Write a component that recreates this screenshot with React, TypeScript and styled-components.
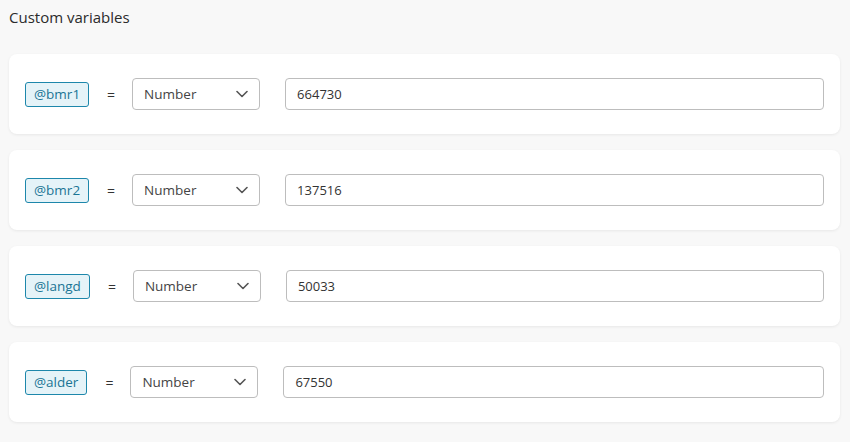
import React from "react";
import styled, { createGlobalStyle } from "styled-components";

const Global = createGlobalStyle`
  html, body { margin: 0; padding: 0; background: #f8f8f8; }
  body { font-family: "Open Sans", "Noto Sans", Arial, sans-serif; color: #333; overflow: hidden; }
  * { box-sizing: border-box; }
`;

const Page = styled.div`
  padding: 0 10px 0 9px;
  height: 442px;
  overflow: hidden;
`;

const Title = styled.h2`
  margin: 0;
  padding-top: 6px;
  font-size: 15px;
  font-weight: 400;
  line-height: 22px;
  color: #2b2b2b;
  height: 54px;
`;

const List = styled.div`
  display: flex;
  flex-direction: column;
  gap: 16px;
`;

const Card = styled.div`
  background: #fff;
  border-radius: 8px;
  box-shadow: 0 1px 3px rgba(0, 0, 0, 0.07);
  height: 80px;
  padding: 0 16px;
  display: flex;
  align-items: center;
`;

const Tag = styled.span`
  display: inline-flex;
  align-items: center;
  height: 25px;
  padding: 0 8px;
  border: 1px solid #1d87ab;
  border-radius: 3px;
  background: #e5f3f8;
  color: #1a7595;
  font-size: 13.5px;
`;

const Eq = styled.span`
  margin: 0 17px 0 18px;
  font-size: 14px;
  color: #333;
  width: 8px;
  text-align: center;
`;

const Select = styled.div`
  width: 128px;
  height: 32px;
  flex: none;
  border: 1px solid #bdbdbd;
  border-radius: 4px;
  background: #fff;
  display: flex;
  align-items: center;
  justify-content: space-between;
  padding: 0 11px 0 11px;
  font-size: 13.5px;
  color: #444;
`;

const Input = styled.input`
  flex: 1;
  height: 32px;
  margin-left: 25px;
  border: 1px solid #bdbdbd;
  border-radius: 4px;
  padding: 0 11px;
  font-family: inherit;
  font-size: 13px;
  color: #333;
  background: #fff;
  outline: none;
`;

const AddLink = styled.div`
  margin-top: 15px;
  padding-left: 15px;
  font-size: 15px;
  line-height: 22px;
  color: #2b2b2b;
`;

const Chevron = () => (
  <svg width="12" height="8" viewBox="0 0 12 8" fill="none">
    <path d="M1 1.5 L6 6.5 L11 1.5" stroke="#555" strokeWidth="1.6" strokeLinecap="round" strokeLinejoin="round" />
  </svg>
);

const rows = [
  { name: "@bmr1", value: "664730" },
  { name: "@bmr2", value: "137516" },
  { name: "@langd", value: "50033" },
  { name: "@alder", value: "67550" },
];

export default function App() {
  return (
    <>
      <Global />
      <Page>
        <Title>Custom variables</Title>
        <List>
          {rows.map((r) => (
            <Card key={r.name}>
              <Tag>{r.name}</Tag>
              <Eq>=</Eq>
              <Select>
                <span>Number</span>
                <Chevron />
              </Select>
              <Input defaultValue={r.value} />
            </Card>
          ))}
        </List>
        <AddLink>Add custom variable</AddLink>
      </Page>
    </>
  );
}
